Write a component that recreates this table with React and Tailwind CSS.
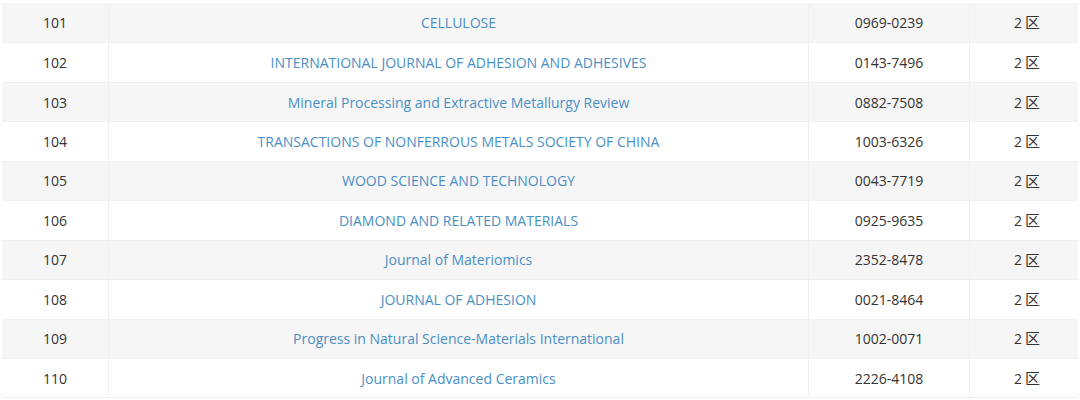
import React from 'react'

const rows = [
  [101, 'CELLULOSE', '0969-0239'],
  [102, 'INTERNATIONAL JOURNAL OF ADHESION AND ADHESIVES', '0143-7496'],
  [103, 'Mineral Processing and Extractive Metallurgy Review', '0882-7508'],
  [104, 'TRANSACTIONS OF NONFERROUS METALS SOCIETY OF CHINA', '1003-6326'],
  [105, 'WOOD SCIENCE AND TECHNOLOGY', '0043-7719'],
  [106, 'DIAMOND AND RELATED MATERIALS', '0925-9635'],
  [107, 'Journal of Materiomics', '2352-8478'],
  [108, 'JOURNAL OF ADHESION', '0021-8464'],
  [109, 'Progress in Natural Science-Materials International', '1002-0071'],
  [110, 'Journal of Advanced Ceramics', '2226-4108'],
]

export default function App() {
  return (
    <div
      className="w-[1080px] h-[400px] bg-white pt-[3px] pl-[2px] pr-[2px] overflow-hidden text-[14px] text-[#333]"
      style={{ fontFamily: '"Open Sans", "Noto Sans CJK SC", sans-serif' }}
    >
      <div className="border-b border-[#eee]">
        {rows.map(([no, name, issn], i) => (
          <div
            key={no}
            className={`grid grid-cols-[106px_700px_161px_1fr] h-[39.45px] border-t border-[#f0f0f0] first:border-t-0 ${
              i % 2 === 0 ? 'bg-[#f6f6f6]' : 'bg-white'
            }`}
          >
            <div className="flex items-center justify-center">{no}</div>
            <div className="flex items-center justify-center border-l border-[#f0f0f0] text-[#4a8fc6]">
              {name}
            </div>
            <div className="flex items-center justify-center border-l border-[#f0f0f0]">{issn}</div>
            <div className="flex items-center justify-center border-l border-[#f0f0f0] pl-[6px]">
              2<span className="ml-[3px] text-[15px]" style={{ fontFamily: '"Noto Sans CJK SC", sans-serif' }}>区</span>
            </div>
          </div>
        ))}
      </div>
    </div>
  )
}
